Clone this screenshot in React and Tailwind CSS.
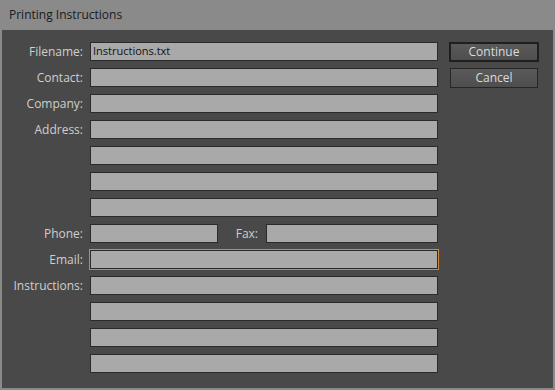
import React from 'react';

const font = { fontFamily: '"Open Sans", "Noto Sans", sans-serif' };

const Field = ({ value = '', focused = false, className = '' }) => (
    <div
        className={`h-[19px] bg-[#a9a9a9] border border-[#2b2b2b] flex items-center pl-[2px] text-[11px] text-[#111] ${focused ? 'ring-1 ring-[#c98a3c]' : ''} ${className}`}
    >
        {value}
    </div>
);

const Row = ({ label, children }) => (
    <div className="flex items-center h-[19px]">
        <div className="w-[81px] text-right text-[12px] text-[#cfcfcf] leading-none pt-[1px]">{label}</div>
        <div className="ml-[7px] flex-1 flex items-center">{children}</div>
    </div>
);

export default function App() {
    const rows = [
        { label: 'Filename:', value: 'Instructions.txt' },
        { label: 'Contact:' },
        { label: 'Company:' },
        { label: 'Address:' },
        { label: '' },
        { label: '' },
        { label: '' },
    ];
    const extra = ['', '', ''];

    return (
        <div className="w-[555px] h-[390px] bg-[#8a8a8a] flex flex-col" style={font}>
            <div className="h-[30px] shrink-0 flex items-center pl-[9px] text-[12px] text-[#1a1a1a]">
                Printing Instructions
            </div>
            <div className="flex-1 mx-[2px] mb-[2px] bg-[#494949] flex pt-[12px]">
                <div className="w-[436px] flex flex-col gap-[7px]">
                    {rows.map((r, i) => (
                        <Row key={i} label={r.label}>
                            <Field value={r.value} className="flex-1" />
                        </Row>
                    ))}
                    <Row label="Phone:">
                        <Field className="w-[128px]" />
                        <div className="w-[48px] text-right pr-[8px] pt-[1px] text-[12px] text-[#cfcfcf] leading-none">Fax:</div>
                        <Field className="flex-1" />
                    </Row>
                    <Row label="Email:">
                        <Field focused className="flex-1" />
                    </Row>
                    <Row label="Instructions:">
                        <Field className="flex-1" />
                    </Row>
                    {extra.map((_, i) => (
                        <Row key={i} label="">
                            <Field className="flex-1" />
                        </Row>
                    ))}
                </div>
                <div className="ml-[11px] flex flex-col">
                    <button className="w-[90px] h-[20px] border-2 border-[#1f1f1f] bg-gradient-to-b from-[#5a5a5a] to-[#4e4e4e] text-[12px] text-[#dcdcdc] leading-none">
                        Continue
                    </button>
                    <button className="mt-[6px] ml-[1px] w-[88px] h-[20px] border border-[#262626] bg-gradient-to-b from-[#5a5a5a] to-[#4e4e4e] text-[12px] text-[#dcdcdc] leading-none">
                        Cancel
                    </button>
                </div>
            </div>
        </div>
    );
}
